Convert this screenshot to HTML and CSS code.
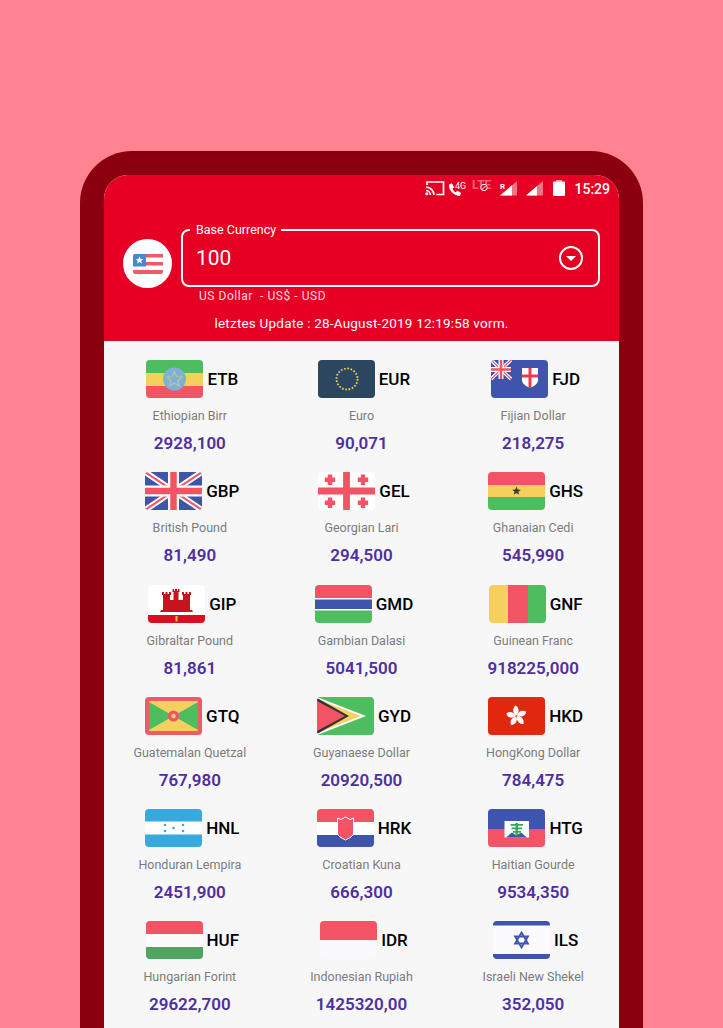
FILE: index.html
```html
<!DOCTYPE html>
<html lang="en">
<head>
<meta charset="utf-8">
<title>Currency Converter</title>
<link rel="stylesheet" href="styles.css">
</head>
<body>
<div class="phone">
  <div class="screen">
    <header class="header">
      <div class="status">
        <svg class="status-icons" width="141" height="20" viewBox="0 0 141 20">
          <g fill="none" stroke="#fff" stroke-width="1.700"><path d="M2 6V3h16.500v12.500h-7"/><path d="M1 8a8.500 8.500 0 0 1 8 8M1 11.500a5 5 0 0 1 4.500 4.500"/></g>
          <circle cx="1.800" cy="14.800" r="1.500" fill="#fff"/>
          <path d="M24 5.500l2.800-1.300 2.400 4-1.800 1.500c.7 1.600 1.900 2.800 3.400 3.600l1.700-1.600 3.700 2.300-1.200 2.900c-6 .2-11.800-6-11-11.400z" fill="#fff"/>
          <text x="30" y="9.500" class="st-small">4G</text>
          <text x="47" y="9.500" class="st-lte">LTE</text>
          <circle cx="59" cy="8.500" r="3.200" fill="#e60023" stroke="#fff" stroke-width="1"/><path d="M57 10.500l4-4" stroke="#fff" stroke-width="1"/>
          <text x="75" y="9.500" class="st-r">R</text>
          <path d="M75 16.500L92 2v14.500z" fill="#fff" fill-opacity=".45"/><path d="M75 16.500L87 6.500v10z" fill="#fff"/>
          <path d="M101 16.500L118 2v14.500z" fill="#fff" fill-opacity=".45"/><path d="M101 16.500L112 7v9.500z" fill="#fff"/>
          <rect x="128" y="2.500" width="12" height="14.500" rx="1" fill="#fff"/><rect x="131" y="1" width="6" height="2" fill="#fff" fill-opacity=".6"/>
        </svg>
        <span class="time">15:29</span>
      </div>
      <div class="base-row">
        <div class="base-flag">
          <svg width="30" height="20" viewBox="0 0 30 20"><rect width="30" height="20" rx="2.500" fill="#fff"/><path d="M0 2.500A2.500 2.500 0 0 1 2.500 0H30v3.500H0zM0 8h30v3.500H0zM0 16h30V17.500A2.500 2.500 0 0 1 27.500 20H2.500A2.500 2.500 0 0 1 0 17.500z" fill="#ee5a6a"/><path d="M0 2.500A2.500 2.500 0 0 1 2.500 0H13v12.500H0z" fill="#4a86d8"/><path d="M6.500 2.500l1.100 2.500 2.600.2-2 1.700.7 2.600-2.400-1.400-2.400 1.400.7-2.600-2-1.700 2.600-.2z" fill="#fff"/></svg>
        </div>
        <div class="base-field">
          <span class="legend">Base Currency</span>
          <span class="amount">100</span>
          <svg class="drop" width="24" height="24" viewBox="0 0 24 24"><circle cx="12" cy="12" r="11" fill="none" stroke="#fff" stroke-width="2"/><path d="M7 10h10l-5 5z" fill="#fff"/></svg>
        </div>
      </div>
      <p class="base-name">US Dollar&nbsp; - US$ - USD</p>
      <p class="updated">letztes Update : 28-August-2019 12:19:58 vorm.</p>
    </header>
    <main class="grid">
      <section class="cell">
        <div class="head"><svg class="flag" viewBox="0 0 57 38"><rect width="57" height="13" fill="#4dbd5f"/><rect y="13" width="57" height="13" fill="#f6d05f"/><rect y="26" width="57" height="12" fill="#f25465"/><circle cx="28.500" cy="19" r="11.500" fill="#7fb0d8"/><path d="M28.500 11.500l2.200 5 5.300.5-4 3.500 1.200 5.300-4.700-2.800-4.700 2.800 1.200-5.300-4-3.500 5.300-.5z" fill="none" stroke="#b9c49a" stroke-width="1.200"/></svg><b class="code">ETB</b></div>
        <p class="name">Ethiopian Birr</p><p class="value">2928,100</p>
      </section>
      <section class="cell">
        <div class="head"><svg class="flag" viewBox="0 0 57 38"><rect width="57" height="38" fill="#2d4660"/><circle cx="29" cy="19" r="10.500" fill="none" stroke="#e4d94e" stroke-width="1.900" stroke-dasharray="1.600 1.700"/></svg><b class="code">EUR</b></div>
        <p class="name">Euro</p><p class="value">90,071</p>
      </section>
      <section class="cell">
        <div class="head"><svg class="flag" viewBox="0 0 57 38"><rect width="57" height="38" fill="#3f55ad"/><path d="M0 0l20 19M20 0L0 19" stroke="#fff" stroke-width="3.500"/><path d="M0 0l20 19M20 0L0 19" stroke="#f25465" stroke-width="1.200"/><path d="M10 0v19M0 9.500h20" stroke="#fff" stroke-width="5"/><path d="M10 0v19M0 9.500h20" stroke="#f25465" stroke-width="2.500"/><path d="M31 8h16v12c0 4-4 6-8 8-4-2-8-4-8-8z" fill="#fff"/><path d="M37.500 8h3v20h-3zM31 14.500h16v3H31z" fill="#ee3b4c"/></svg><b class="code">FJD</b></div>
        <p class="name">Fijian Dollar</p><p class="value">218,275</p>
      </section>

      <section class="cell">
        <div class="head"><svg class="flag" viewBox="0 0 57 38"><rect width="57" height="38" fill="#3e55a8"/><path d="M0 0l57 38M57 0L0 38" stroke="#fff" stroke-width="6"/><path d="M0 0l57 38M57 0L0 38" stroke="#f25465" stroke-width="2"/><path d="M28.500 0v38M0 19h57" stroke="#fff" stroke-width="11"/><path d="M28.500 0v38M0 19h57" stroke="#f25465" stroke-width="6.500"/></svg><b class="code">GBP</b></div>
        <p class="name">British Pound</p><p class="value">81,490</p>
      </section>
      <section class="cell">
        <div class="head"><svg class="flag" viewBox="0 0 57 38"><rect width="57" height="38" fill="#fff"/><path d="M28.500 0v38M0 19h57" stroke="#f25465" stroke-width="6.800"/><g fill="#f25465"><path d="M9.800 2.500h4.400v3h3v4.400h-3v3H9.800v-3h-3V5.500h3z"/><path d="M42.800 2.500h4.400v3h3v4.400h-3v3h-4.400v-3h-3V5.500h3z"/><path d="M9.800 25.500h4.400v3h3v4.400h-3v3H9.800v-3h-3v-4.400h3z"/><path d="M42.800 25.500h4.400v3h3v4.400h-3v3h-4.400v-3h-3v-4.400h3z"/></g></svg><b class="code">GEL</b></div>
        <p class="name">Georgian Lari</p><p class="value">294,500</p>
      </section>
      <section class="cell">
        <div class="head"><svg class="flag" viewBox="0 0 57 38"><rect width="57" height="13" fill="#f25465"/><rect y="13" width="57" height="12" fill="#f6d05f"/><rect y="25" width="57" height="13" fill="#4dbd5f"/><path d="M28.500 14.500l1.200 3 3.200.2-2.500 2 .8 3.100-2.700-1.700-2.700 1.700.8-3.100-2.500-2 3.200-.2z" fill="#3a3a3a"/></svg><b class="code">GHS</b></div>
        <p class="name">Ghanaian Cedi</p><p class="value">545,990</p>
      </section>

      <section class="cell">
        <div class="head"><svg class="flag" viewBox="0 0 57 38"><rect width="57" height="38" fill="#fff"/><rect y="30" width="57" height="8" fill="#d5101f"/><path d="M12 27l1-2h2V10h-1V7h2V9h1.500V7h2v2H21V7h2v3h-1v5h3.500V7h-1V4h1.500v1.500h1V4h2v1.500h1V4h1.500v3h-1v8H35v-5h-1V7h2v2h1.500V7h2v2H41V7h2v3h-1v15h2l1 2z" fill="#c9141f"/><path d="M27.500 31h2v5.500h-2z" fill="#e8c54a"/></svg><b class="code">GIP</b></div>
        <p class="name">Gibraltar Pound</p><p class="value">81,861</p>
      </section>
      <section class="cell">
        <div class="head"><svg class="flag" viewBox="0 0 57 38"><rect width="57" height="38" fill="#fff"/><rect width="57" height="13" fill="#f25465"/><rect y="14.500" width="57" height="9.500" fill="#3f55ad"/><rect y="25.500" width="57" height="12.500" fill="#4dbd5f"/></svg><b class="code">GMD</b></div>
        <p class="name">Gambian Dalasi</p><p class="value">5041,500</p>
      </section>
      <section class="cell">
        <div class="head"><svg class="flag" viewBox="0 0 57 38"><rect width="19" height="38" fill="#f6d05f"/><rect x="19" width="20" height="38" fill="#f25465"/><rect x="39" width="18" height="38" fill="#4dbd5f"/></svg><b class="code">GNF</b></div>
        <p class="name">Guinean Franc</p><p class="value">918225,000</p>
      </section>

      <section class="cell">
        <div class="head"><svg class="flag" viewBox="0 0 57 38"><rect width="57" height="38" fill="#f05a68"/><rect x="4" y="4" width="49" height="30" fill="#f6d05f"/><path d="M4 5l24.500 14L4 33zM53 5L28.500 19 53 33z" fill="#4dbd5f"/><circle cx="28.500" cy="19" r="5.500" fill="#f25465"/><circle cx="28.500" cy="19" r="2.200" fill="#f6d05f"/></svg><b class="code">GTQ</b></div>
        <p class="name">Guatemalan Quetzal</p><p class="value">767,980</p>
      </section>
      <section class="cell">
        <div class="head"><svg class="flag" viewBox="0 0 57 38"><rect width="57" height="38" fill="#4dbd5f"/><path d="M0 0l49 19L0 38z" fill="#fff"/><path d="M0 2l44 17L0 36z" fill="#f6d05f"/><path d="M0 1l32 18L0 37z" fill="#333"/><path d="M0 4l28 15L0 34z" fill="#f25465"/></svg><b class="code">GYD</b></div>
        <p class="name">Guyanaese Dollar</p><p class="value">20920,500</p>
      </section>
      <section class="cell">
        <div class="head"><svg class="flag" viewBox="0 0 57 38"><rect width="57" height="38" fill="#e0280f"/><g fill="#fff"><path d="M28.300 18.500c-3.500-2.500-4.500-6.500-.8-10 3.300 1.500 4.500 6.500.8 10z"/><path transform="rotate(72 28.500 19)" d="M28.300 18.500c-3.500-2.500-4.500-6.500-.8-10 3.300 1.500 4.500 6.500.8 10z"/><path transform="rotate(144 28.500 19)" d="M28.300 18.500c-3.500-2.500-4.500-6.500-.8-10 3.300 1.500 4.500 6.500.8 10z"/><path transform="rotate(216 28.500 19)" d="M28.300 18.500c-3.500-2.500-4.500-6.500-.8-10 3.300 1.500 4.500 6.500.8 10z"/><path transform="rotate(288 28.500 19)" d="M28.300 18.500c-3.500-2.500-4.500-6.500-.8-10 3.300 1.500 4.500 6.500.8 10z"/></g></svg><b class="code">HKD</b></div>
        <p class="name">HongKong Dollar</p><p class="value">784,475</p>
      </section>

      <section class="cell">
        <div class="head"><svg class="flag" viewBox="0 0 57 38"><rect width="57" height="38" fill="#38a9df"/><rect y="12.500" width="57" height="13" fill="#fff"/><g fill="#38a9df"><circle cx="20" cy="16" r="1.300"/><circle cx="20" cy="22" r="1.300"/><circle cx="28.500" cy="19" r="1.300"/><circle cx="38" cy="16" r="1.300"/><circle cx="38" cy="22" r="1.300"/></g></svg><b class="code">HNL</b></div>
        <p class="name">Honduran Lempira</p><p class="value">2451,900</p>
      </section>
      <section class="cell">
        <div class="head"><svg class="flag" viewBox="0 0 57 38"><rect width="57" height="13" fill="#f25465"/><rect y="13" width="57" height="13" fill="#fff"/><rect y="26" width="57" height="12" fill="#3f55ad"/><path d="M20.500 9l3.500 1.500 4.500-2.500 4.500 2.500 3.500-1.500v15c0 3-4 5-8 7-4-2-8-4-8-7z" fill="#f25465" stroke="#fff" stroke-width="1"/></svg><b class="code">HRK</b></div>
        <p class="name">Croatian Kuna</p><p class="value">666,300</p>
      </section>
      <section class="cell">
        <div class="head"><svg class="flag" viewBox="0 0 57 38"><rect width="57" height="20" fill="#3f55ad"/><rect y="20" width="57" height="18" fill="#f25465"/><rect x="16.500" y="12" width="24.500" height="16.500" fill="#fff"/><path d="M18 28.500l6-5 4.500 3 4.500-3 6 5z" fill="#3f55ad"/><path d="M27.500 14h2.500v13h-2.500zM22.500 15h12.500v1.800H22.500zM23.500 18.500h10.500v1.800H23.500zM25 22h8v1.800h-8z" fill="#36a85a"/></svg><b class="code">HTG</b></div>
        <p class="name">Haitian Gourde</p><p class="value">9534,350</p>
      </section>

      <section class="cell">
        <div class="head"><svg class="flag" viewBox="0 0 57 38"><rect width="57" height="13" fill="#f25465"/><rect y="13" width="57" height="13" fill="#fbfbfd"/><rect y="26" width="57" height="12" fill="#4ca65e"/></svg><b class="code">HUF</b></div>
        <p class="name">Hungarian Forint</p><p class="value">29622,700</p>
      </section>
      <section class="cell">
        <div class="head"><svg class="flag" viewBox="0 0 57 38"><rect width="57" height="38" fill="#f9f9fb"/><rect width="57" height="19" fill="#f25465"/></svg><b class="code">IDR</b></div>
        <p class="name">Indonesian Rupiah</p><p class="value">1425320,00</p>
      </section>
      <section class="cell">
        <div class="head"><svg class="flag" viewBox="0 0 57 38"><rect width="57" height="38" fill="#fbfbfd"/><rect width="57" height="4.500" fill="#3f55ad"/><rect y="33" width="57" height="5" fill="#3f55ad"/><path d="M28.500 11.500l6.500 11h-13zM28.500 26.500l-6.500-11h13z" fill="none" stroke="#3f55ad" stroke-width="1.800"/></svg><b class="code">ILS</b></div>
        <p class="name">Israeli New Shekel</p><p class="value">352,050</p>
      </section>
    </main>
  </div>
</div>
</body>
</html>
```
FILE: styles.css
```css
* { box-sizing: border-box; }
html, body { margin: 0; height: 1028px; overflow: hidden; }
body {
  background: #ff8390;
  padding: 151px 80px 0;
  font-family: Roboto, "Liberation Sans", sans-serif;
}
p { margin: 0; }

.phone {
  width: 563px;
  height: 900px;
  background: #8b000f;
  border-radius: 52px 52px 0 0;
  padding: 24px 24px 0;
}
.screen {
  width: 515px;
  height: 100%;
  border-radius: 24px 24px 0 0;
  overflow: hidden;
  background: #f7f7f8;
}

.header {
  height: 166px;
  background: #e60023;
  color: #fff;
}
.status {
  height: 30px;
  display: flex;
  justify-content: flex-end;
  align-items: center;
  padding: 0 9px 2px 0;
  gap: 8px;
}
.status-icons { display: block; }
.st-small { font-size: 9px; fill: #fff; }
.st-r { font-size: 8px; font-weight: 700; fill: #fff; }
.st-lte { font-size: 12px; font-weight: 700; fill: #fff; fill-opacity: .4; }
.time { font-size: 14px; font-weight: 500; }

.base-row {
  display: flex;
  margin-top: 24px;
  padding-left: 19px;
  gap: 9px;
}
.base-flag {
  width: 49px;
  height: 49px;
  margin: 10px 0 -1px;
  border-radius: 50%;
  background: #fff;
  display: flex;
  align-items: center;
  justify-content: center;
  flex: none;
}
.base-field {
  position: relative;
  width: 419px;
  height: 58px;
  border: 2px solid #fff;
  border-radius: 8px;
  display: flex;
  align-items: center;
  justify-content: space-between;
  padding: 0 15px 0 13px;
}
.legend {
  position: absolute;
  top: -8px;
  left: 7px;
  padding: 0 5px 0 6px;
  background: #e60023;
  font-size: 12.500px;
  line-height: 14px;
}
.amount { font-size: 21px; }
.drop { display: block; }

.base-name {
  margin: 2px 0 0 95px;
  font-size: 12px;
  line-height: 14px;
  letter-spacing: .55px;
  color: #fbdde0;
}
.updated {
  margin-top: 12px;
  text-align: center;
  font-size: 13.500px;
  line-height: 16px;
  letter-spacing: .2px;
}

.grid {
  display: grid;
  grid-template-columns: repeat(3, 1fr);
  grid-auto-rows: 112.25px;
  padding-top: 19px;
}
.cell { text-align: center; }
.head {
  height: 38px;
  display: flex;
  align-items: center;
  justify-content: center;
  gap: 4px;
  padding-left: 5px;
}
.flag {
  width: 57px;
  height: 38px;
  border-radius: 4px;
  display: block;
  flex: none;
}
.code {
  font-size: 17px;
  font-weight: 500;
  color: #000;
}
.name {
  margin-top: 10px;
  font-size: 12.500px;
  line-height: 15px;
  color: #7b7b7b;
}
.value {
  margin-top: 9px;
  font-size: 17px;
  line-height: 22px;
  font-weight: 600;
  color: #4f2f9f;
}
```
